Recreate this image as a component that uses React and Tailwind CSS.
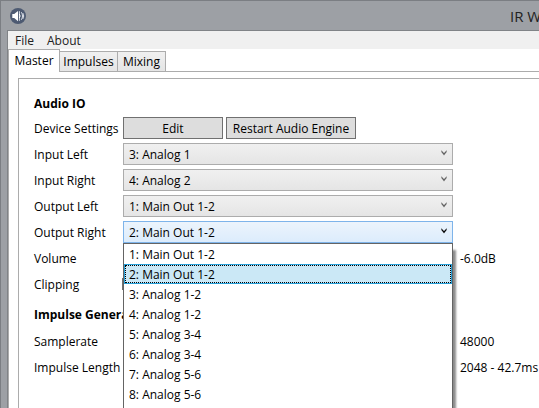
import React, { useState } from "react";

const OUTPUTS = [
  "1: Main Out 1-2",
  "2: Main Out 1-2",
  "3: Analog 1-2",
  "4: Analog 1-2",
  "5: Analog 3-4",
  "6: Analog 3-4",
  "7: Analog 5-6",
  "8: Analog 5-6",
];
const INPUTS = ["1: Analog 1", "2: Analog 2", "3: Analog 1", "4: Analog 2"];

function SpeakerIcon() {
  return (
    <svg viewBox="0 0 16 16" className="size-4 shrink-0" aria-hidden="true">
      <circle cx="8" cy="8" r="8" fill="#4d5a72" />
      <path d="M2.3 6h1.9L8 3v10.2L4.2 10H2.3z" fill="#fff" />
      <path d="M9.4 3.2v9.6M11.3 4.2c1.6 2 1.6 5.6 0 7.6M12.9 5.2c1 1.6 1 4 0 5.6" fill="none" stroke="#dde2ea" strokeWidth="1" />
      <path d="M9.3 6q1.6 2 0 4" fill="none" stroke="#fff" strokeWidth="1" />
    </svg>
  );
}

function Chevron({ open }) {
  return (
    <svg viewBox="0 0 6 6" className={`pointer-events-none absolute right-[6px] top-[7px] size-[6px] ${open ? "text-black" : "text-[#606060]"}`} aria-hidden="true">
      <path d="M0.5 0.5v1.6L3 5.2 5.5 2.1V0.5L3 3.2z" fill="currentColor" stroke="currentColor" strokeWidth="0.2" />
    </svg>
  );
}

function Row({ label, htmlFor, children }) {
  return (
    <div className="flex h-[26px] items-center">
      {htmlFor ? (
        <label htmlFor={htmlFor} className="w-[89px] shrink-0 pt-0.5">{label}</label>
      ) : (
        <span className="w-[89px] shrink-0 pt-0.5">{label}</span>
      )}
      {children}
    </div>
  );
}

function Combo({ id, options, value, onChange, open, children }) {
  return (
    <div className="relative w-[330px] shrink-0">
      <select
        id={id}
        value={value}
        onChange={(e) => onChange(e.target.value)}
        className={`block h-[22px] w-full appearance-none border bg-linear-to-b pl-[5px] pr-5 pt-0.5 outline-none ${
          open ? "border-[#7eb4ea] from-[#ecf4fc] to-[#dcecfc]" : "border-[#acacac] from-[#f0f0f0] to-[#e5e5e5]"
        }`}
      >
        {options.map((o) => (
          <option key={o}>{o}</option>
        ))}
      </select>
      <Chevron open={open} />
      {children}
    </div>
  );
}

export default function App() {
  const [inL, setInL] = useState("3: Analog 1");
  const [inR, setInR] = useState("4: Analog 2");
  const [outL, setOutL] = useState("1: Main Out 1-2");
  const [outR, setOutR] = useState("2: Main Out 1-2");
  const button = "h-[22px] border border-[#707070] bg-[#dddddd] pt-0.5 text-center";
  const tab = "h-5 border border-b-0 border-[#acacac] bg-linear-to-b from-[#f0f0f0] to-[#e5e5e5]";

  return (
    <div className="flex h-screen flex-col overflow-hidden whitespace-nowrap border-l border-t border-[#7b7e83] bg-[#9da0a5] font-['Open_Sans',sans-serif] text-[12px] leading-4 text-black">
      <header className="flex h-[29px] shrink-0 items-center pl-[9px]">
        <SpeakerIcon />
        <h1 className="ml-[484px] text-[15px] text-[#222222]">IR W</h1>
      </header>
      <div className="ml-[6px] flex grow flex-col border-l border-t border-[#808387] bg-white">
        <nav className="flex h-[18px] shrink-0 items-center gap-[13px] bg-[#f0f0f0] pl-[7px] pt-0.5 text-[#212121]">
          <button type="button">File</button>
          <button type="button">About</button>
        </nav>
        <div role="tablist" className="flex h-[23px] shrink-0 items-end">
          <button type="button" role="tab" aria-selected="true" className="h-[23px] w-[52px] border border-b-0 border-[#acacac] bg-white">Master</button>
          <div className="flex h-[21px] grow border-b border-[#acacac]">
            <button type="button" role="tab" aria-selected="false" className={`${tab} w-[58px] border-l-0`}>Impulses</button>
            <button type="button" role="tab" aria-selected="false" className={`${tab} w-[48px] border-l-0`}>Mixing</button>
          </div>
        </div>
        <main className="flex grow flex-col border-l border-[#acacac] pl-[9px] pt-[6px]">
          <div className="grow border-l border-t border-[#acacac] pl-[15px] pt-3">
            <h2 className="flex h-6 items-center pt-0.5 font-bold">Audio IO</h2>
            <Row label="Device Settings">
              <button type="button" className={`${button} w-[100px]`}>Edit</button>
              <button type="button" className={`${button} ml-[3px] w-[130px]`}>Restart Audio Engine</button>
            </Row>
            <Row label="Input Left" htmlFor="in-left">
              <Combo id="in-left" options={INPUTS} value={inL} onChange={setInL} />
            </Row>
            <Row label="Input Right" htmlFor="in-right">
              <Combo id="in-right" options={INPUTS} value={inR} onChange={setInR} />
            </Row>
            <Row label="Output Left" htmlFor="out-left">
              <Combo id="out-left" options={OUTPUTS} value={outL} onChange={setOutL} />
            </Row>
            <Row label="Output Right" htmlFor="out-right">
              <Combo id="out-right" options={OUTPUTS} value={outR} onChange={setOutR} open>
                <ul
                  role="listbox"
                  aria-label="Output Right"
                  className="absolute left-0 top-full z-10 h-[200px] w-full border border-[#646464] bg-white shadow-[4px_6px_2px_-1px_rgba(0,0,0,0.45)]"
                >
                  {OUTPUTS.map((o) => (
                    <li
                      key={o}
                      role="option"
                      aria-selected={o === outR}
                      onClick={() => setOutR(o)}
                      className={`h-5 border ${o === outR ? "border-[#26a0da] bg-[#cbe8f6]" : "border-transparent"}`}
                    >
                      <span className={`flex h-full items-center border border-dotted pl-[3px] pt-0.5 ${o === outR ? "border-black" : "border-transparent"}`}>{o}</span>
                    </li>
                  ))}
                </ul>
              </Combo>
            </Row>
            <Row label="Volume">
              <output className="ml-[337px] pt-0.5">-6.0dB</output>
            </Row>
            <Row label="Clipping">
              <span className="-ml-px size-3 border border-[#707070]" />
            </Row>
            <h2 className="h-[31px] w-[89px] overflow-hidden pt-[10px] font-bold">Impulse Generation</h2>
            <Row label="Samplerate">
              <output className="ml-[337px] pt-0.5">48000</output>
            </Row>
            <Row label="Impulse Length">
              <output className="ml-[337px] pt-0.5">2048 - 42.7ms</output>
            </Row>
          </div>
        </main>
      </div>
    </div>
  );
}
